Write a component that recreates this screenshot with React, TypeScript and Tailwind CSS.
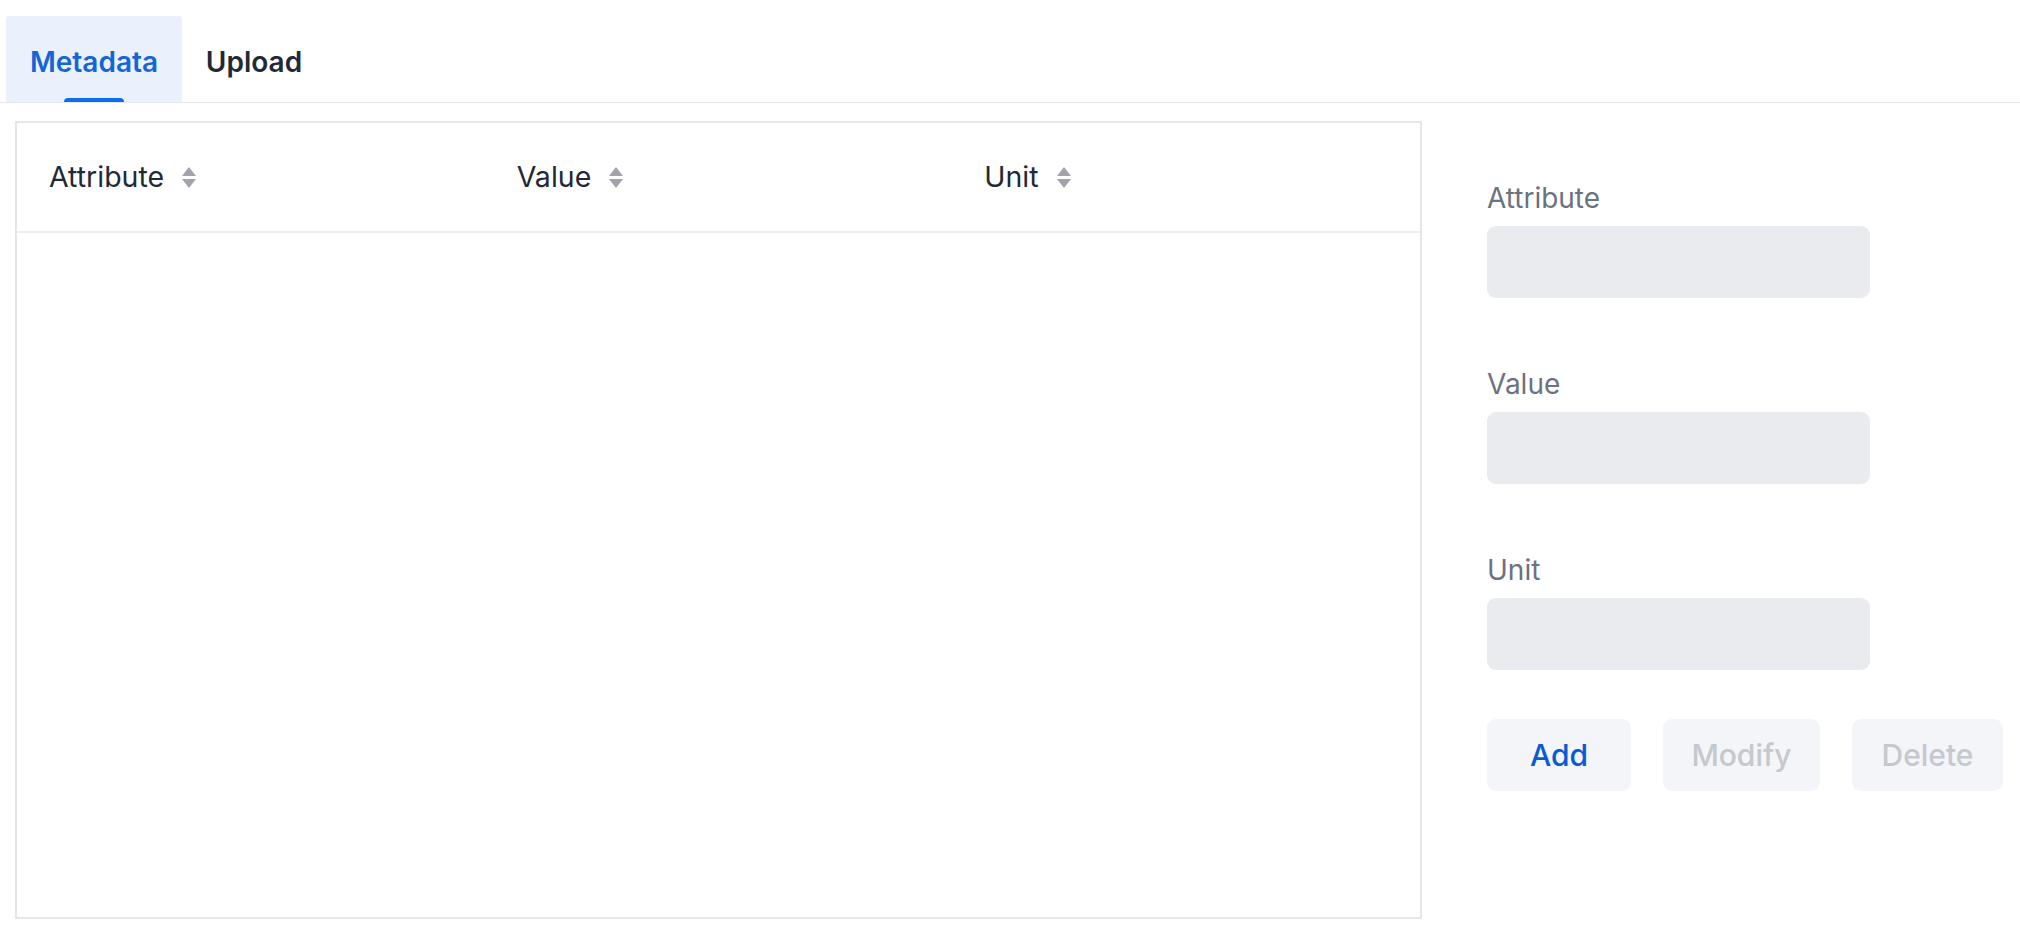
import React from 'react';

const SortIcon: React.FC = () => (
  <svg width="14" height="21" viewBox="0 0 14 21" className="shrink-0" aria-hidden="true">
    <path d="M7 0 L14 9 L0 9 Z" fill="#a1a4ab" />
    <path d="M0 12 L14 12 L7 21 Z" fill="#a1a4ab" />
  </svg>
);

const columns = ['Attribute', 'Value', 'Unit'];
const fields = ['Attribute', 'Value', 'Unit'];

export default function App() {
  const [tab, setTab] = React.useState<'metadata' | 'upload'>('metadata');

  return (
    <div className="h-[930px] w-[2020px] overflow-hidden bg-white font-['Inter','Liberation_Sans',sans-serif] text-[#1f2937]">
      {/* Tabs */}
      <div className="flex h-[103px] items-end border-b border-[#e6e8eb] pl-[6px]">
        <button
          onClick={() => setTab('metadata')}
          className={`relative flex h-[86px] w-[176px] items-center justify-center rounded-t-[3px] pt-[5px] text-[28px] font-semibold ${tab === 'metadata' ? 'bg-[#eaf1fd] text-[#1465d6]' : 'text-[#1f2937]'}`}
        >
          Metadata
          {tab === 'metadata' && (
            <span className="absolute bottom-0 left-[58px] h-[4px] w-[60px] rounded-t-full bg-[#0b6cf0]" />
          )}
        </button>
        <button
          onClick={() => setTab('upload')}
          className={`relative flex h-[86px] w-[144px] items-center justify-center pt-[5px] text-[28px] font-semibold ${tab === 'upload' ? 'bg-[#eaf1fd] text-[#1465d6]' : 'text-[#1f2937]'}`}
        >
          Upload
        </button>
      </div>

      <div className="flex pl-[15px] pt-[18px]">
        {/* Table */}
        <div className="h-[798px] w-[1407px] shrink-0 border-2 border-[#e4e6e9]">
          <div className="grid h-[110px] grid-cols-3 border-b-2 border-[#eceef0]">
            {columns.map((c) => (
              <div key={c} className="flex items-center gap-[18px] pl-[32px] text-[28.5px] leading-none">
                <span>{c}</span>
                <SortIcon />
              </div>
            ))}
          </div>
        </div>

        {/* Form */}
        <div className="ml-[65px] flex flex-col pt-[60px]">
          {fields.map((f, i) => (
            <div key={f} className={i > 0 ? 'mt-[69px]' : ''}>
              <label className="block text-[28px] leading-[34px] text-[#6b7280]">{f}</label>
              <input
                type="text"
                className="mt-[11px] block h-[72px] w-[383px] rounded-[9px] bg-[#e9ebee] px-4 text-[28px] outline-none"
              />
            </div>
          ))}

          <div className="mt-[49px] flex gap-[32px]">
            <button className="h-[72px] w-[144px] rounded-[9px] bg-[#f3f5f8] text-[30px] font-medium text-[#0a5bd3]">
              Add
            </button>
            <button disabled className="h-[72px] w-[157px] rounded-[9px] bg-[#f3f5f8] text-[30px] font-medium text-[#c5c8cd]">
              Modify
            </button>
            <button disabled className="h-[72px] w-[151px] rounded-[9px] bg-[#f3f5f8] text-[30px] font-medium text-[#c5c8cd]">
              Delete
            </button>
          </div>
        </div>
      </div>
    </div>
  );
}
